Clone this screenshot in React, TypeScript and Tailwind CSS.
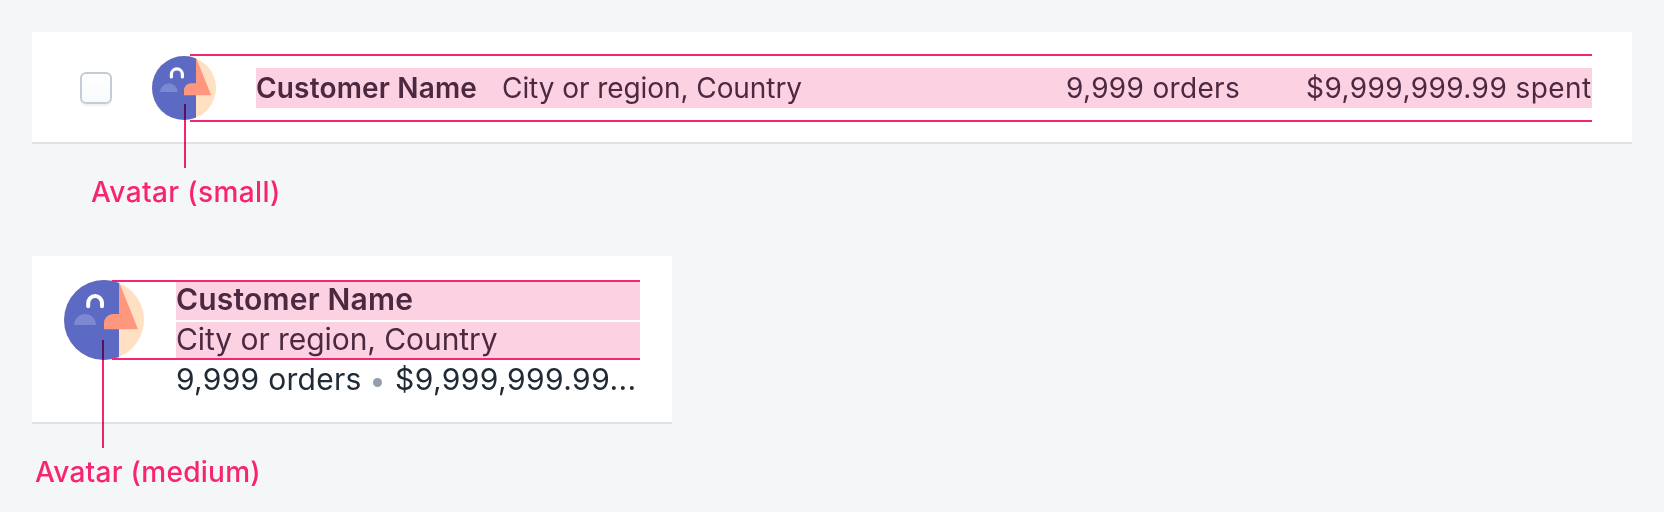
import React from "react";

const font = "font-['Inter','Liberation_Sans',sans-serif]";

function Avatar({ className, id }: { className: string; id: string }) {
  return (
    <svg viewBox="0 0 80 80" className={className} aria-hidden="true">
      <defs>
        <clipPath id={id}>
          <circle cx="40" cy="40" r="40" />
        </clipPath>
      </defs>
      <g clipPath={`url(#${id})`}>
        <rect width="80" height="80" fill="#ffe0c3" />
        <rect width="55" height="80" fill="#5c6ac4" />
        <path d="M55 2 L74 49.2 H40 V43 A9 9 0 0 1 49 34 H55 Z" fill="#ff967e" />
        <path d="M10.2 45 A10.9 10.9 0 0 1 32 45 Z" fill="#7c88cf" />
        <path d="M24.2 26.2 V23.2 A6.9 7.2 0 0 1 38 23.2 V26.2" fill="none" stroke="#fff" strokeWidth="4" strokeLinecap="round" />
      </g>
    </svg>
  );
}

export default function App() {
  return (
    <main className={`${font} h-[512px] w-[1664px] overflow-hidden bg-[#f4f6f8] px-8 pt-8 text-[#212b36]`}>
      <section className="relative h-[224px]">
        <div className="flex h-[112px] items-center border-b-2 border-[#dfe3e8] bg-white pl-12 pr-10 pt-0.5">
          <div className="h-8 w-8 shrink-0 rounded-[6px] border-2 border-[#c4cdd5] bg-linear-to-b from-white to-[#f9fafb] shadow-[0_2px_1px_rgba(22,29,37,0.06)]" />
          <Avatar id="small-avatar" className="ml-10 h-16 w-16 shrink-0" />
          <div className="ml-10 flex h-10 flex-1 items-center whitespace-nowrap bg-[#fcd2e2] text-[28px] leading-10 text-[#4b2a41]">
            <span className="w-[246px] font-semibold tracking-[0.17px]">Customer Name</span>
            <span className="w-[564px] tracking-[-0.07px]">City or region, Country</span>
            <span className="w-[240px] tracking-[0.32px]">9,999 orders</span>
            <span className="tracking-[0.42px]">$9,999,999.99 spent</span>
          </div>
        </div>
        <div className="absolute left-[158px] top-[22px] h-[68px] w-[1402px] border-y-2 border-[#f72571]" />
        <div className="absolute left-[152px] top-[72px] h-16 w-0.5 bg-[#f72571] mix-blend-multiply" />
        <div className="ml-[59px] mt-7 whitespace-nowrap text-[28px] font-medium leading-10 tracking-[0.38px] text-[#f72571]"><span>Avatar (small)</span></div>
      </section>
      <section className="relative">
        <div className="flex h-[168px] w-[640px] border-b-2 border-[#dfe3e8] bg-white px-8 pt-6">
          <Avatar id="medium-avatar" className="h-20 w-20 shrink-0" />
          <div className="ml-8 flex-1 whitespace-nowrap text-[30px]">
            <div className="mt-0.5 h-[38px] bg-[#fcd2e2] font-semibold leading-[35px] tracking-[0.2px] text-[#4b2a41]"><span>Customer Name</span></div>
            <div className="mt-0.5 h-[36px] bg-[#fcd2e2] leading-[35px] tracking-[-0.07px] text-[#4b2a41]"><span>City or region, Country</span></div>
            <div className="flex h-[42px] items-center leading-10">
              <span className="w-[197px] tracking-[0.28px]">9,999 orders</span>
              <i className="mr-[13px] mt-[6px] h-[9px] w-[9px] rounded-full bg-[#919eab]" />
              <span className="tracking-[0.42px]">$9,999,999.99...</span>
            </div>
          </div>
        </div>
        <div className="absolute left-[80px] top-6 h-20 w-[528px] border-y-2 border-[#f72571]" />
        <div className="absolute left-[70px] top-[84px] h-[108px] w-0.5 bg-[#f72571] mix-blend-multiply" />
        <div className="ml-[3px] mt-[28px] whitespace-nowrap text-[28px] font-medium leading-10 tracking-[0.27px] text-[#f72571]"><span>Avatar (medium)</span></div>
      </section>
    </main>
  );
}
